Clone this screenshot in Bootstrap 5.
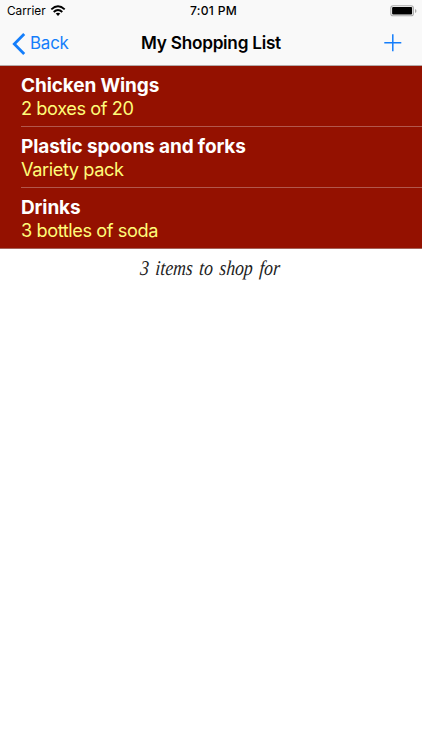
<!DOCTYPE html>
<html lang="en">
<head>
<meta charset="utf-8">
<meta name="viewport" content="width=device-width, initial-scale=1">
<title>My Shopping List</title>
<link href="https://cdn.jsdelivr.net/npm/bootstrap@5.3.0/dist/css/bootstrap.min.css" rel="stylesheet">
<style>
body{font-family:Inter,"Liberation Sans",sans-serif;background:#fff;color:#000;overflow:hidden}
svg{display:block}
.top-area{background:#f9f9f9;height:66px;border-bottom:1px solid #b5aaa9}
.status-row{height:22px;font-size:11.8px;line-height:22px;padding:0 5px 0 7px}
.wifi-icon{margin-left:4px}
.clock{font-weight:500;font-size:12.1px;letter-spacing:.3px;padding-left:3px}
.nav-row{height:43px;padding:0 20px 0 13px}
.side{flex:1 1 0}
.back-link{color:#147efb;font-size:16.9px;letter-spacing:-.2px;line-height:43px}
.back-icon{margin-right:4px;margin-left:-1px}
.page-title{font-size:17.2px;font-weight:600;letter-spacing:-.25px;line-height:42px;padding-bottom:1px;margin-left:7px}
.add-link{padding-bottom:1px}
.shop-list{background:#941100}
.shop-item{margin-left:21px;height:61px;padding-top:9px;border-bottom:1px solid #b2574c;line-height:23px;white-space:nowrap}
.shop-item:last-child{margin-left:0;padding-left:21px;border-color:#a56258}
.item-name{color:#fff;font-weight:700;font-size:19px;letter-spacing:-.12px;line-height:22px}
.item-note{color:#fffc79;font-size:18.2px;letter-spacing:-.42px;line-height:23px}
.summary{font-family:"Liberation Serif",serif;font-style:italic;line-height:38px;white-space:nowrap;color:#222;padding-right:1px}
.summary span{display:inline-block;transform:scaleX(.84) skewX(-5deg);font-size:21px;word-spacing:2.5px}
</style>
<script src="https://cdn.jsdelivr.net/npm/bootstrap@5.3.0/dist/js/bootstrap.bundle.min.js"></script>
</head>
<body>
<header class="top-area">
  <div class="status-row d-flex align-items-center">
    <div class="side d-flex align-items-center"><span>Carrier</span>
      <svg class="wifi-icon" width="16" height="12" viewBox="0 0 16 12" fill="none" stroke="#000" stroke-width="1.9"><path d="M1.3 4.4Q8 -1.7 14.7 4.4M3.7 7Q8 3 12.3 7"/><path d="M5.7 8.6Q8 6.8 10.3 8.6L8 11Z" fill="#000" stroke="none"/></svg>
    </div>
    <span class="clock">7:01 PM</span>
    <div class="side d-flex justify-content-end">
      <svg width="27" height="12" viewBox="0 0 27 12"><rect x=".8" y=".8" width="22.6" height="10" rx="2.4" fill="#f9f9f9" stroke="#aaa" stroke-width="1.1"/><rect x="2.1" y="2.1" width="20" height="7.4" rx="1" fill="#000"/><path d="M25 4V8Q26.5 7.5 26.5 6T25 4" fill="#aaa"/></svg>
    </div>
  </div>
  <nav class="nav-row d-flex align-items-center">
    <div class="side"><a href="#" class="back-link d-inline-flex align-items-center text-decoration-none">
      <svg class="back-icon" width="14" height="22" viewBox="0 0 14 22" fill="none" stroke="#147efb" stroke-width="2.8"><path d="M12.2 1.1L2.3 11L12.2 20.9"/></svg>Back</a></div>
    <span class="page-title">My Shopping List</span>
    <div class="side d-flex justify-content-end"><a href="#" class="add-link" aria-label="Add">
      <svg width="18" height="18" viewBox="0 0 18 18" stroke="#147efb" stroke-width="1.5"><path d="M.3 8.7H17.3M8.8 .2V17.2"/></svg></a></div>
  </nav>
</header>
<main>
  <ul class="shop-list list-unstyled mb-0">
    <li class="shop-item"><div class="item-name">Chicken Wings</div><div class="item-note">2 boxes of 20</div></li>
    <li class="shop-item"><div class="item-name">Plastic spoons and forks</div><div class="item-note">Variety pack</div></li>
    <li class="shop-item"><div class="item-name">Drinks</div><div class="item-note">3 bottles of soda</div></li>
  </ul>
  <div class="summary text-center"><span>3 items to shop for</span></div>
</main>
</body>
</html>
